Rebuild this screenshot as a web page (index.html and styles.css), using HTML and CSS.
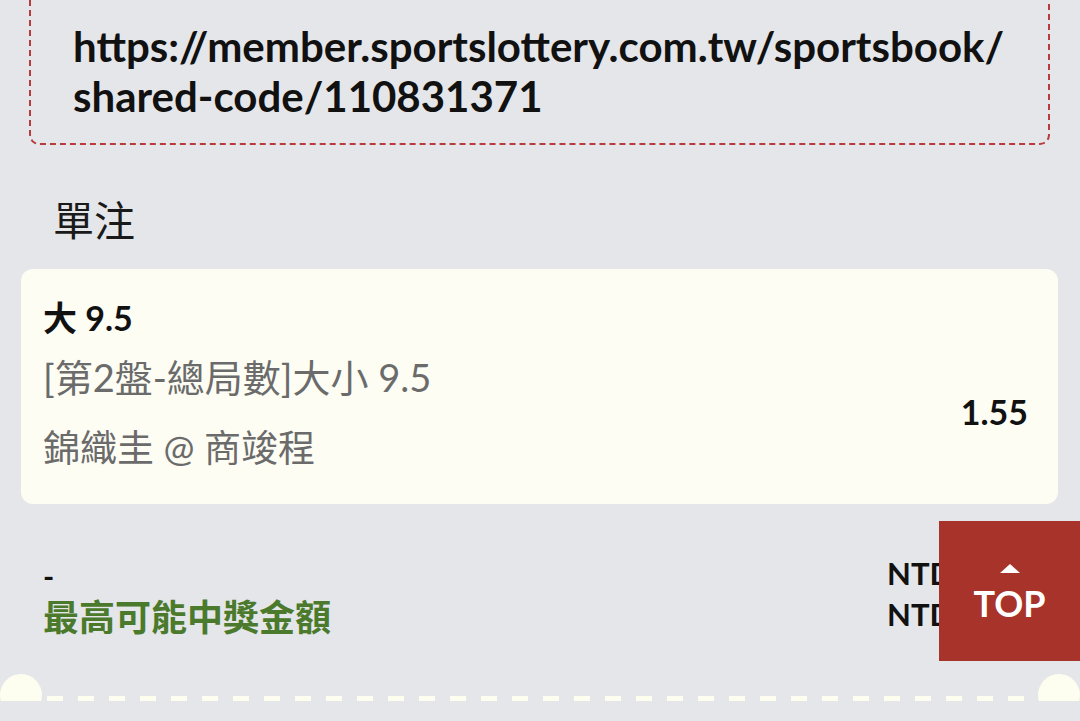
FILE: index.html
```html
<!DOCTYPE html>
<html lang="zh-Hant">
<head>
    <meta charset="UTF-8">
    <meta name="viewport" content="width=device-width, initial-scale=1.0">
    <title>單注分享</title>
    <link rel="stylesheet" href="styles.css">
</head>
<body>
    <div class="page">
        <div class="share-box">
            <p class="share-url">https://member.sportslottery.com.tw/sportsbook/<br>shared-code/110831371</p>
        </div>

        <h2 class="bet-type">單注</h2>

        <div class="bet-card">
            <div class="bet-info">
                <div class="bet-pick">大 9.5</div>
                <div class="bet-market">[第2盤-總局數]大小 9.5</div>
                <div class="bet-match">錦織圭 @ 商竣程</div>
            </div>
            <div class="bet-odds">1.55</div>
        </div>

        <div class="summary">
            <div class="summary-labels">
                <div class="summary-stake">-</div>
                <div class="summary-win">最高可能中獎金額</div>
            </div>
            <div class="summary-amounts">
                <div>NTD 0</div>
                <div>NTD 0</div>
            </div>
        </div>

        <div class="ticket-divider">
            <span class="notch"></span>
            <span class="dashes"></span>
            <span class="notch"></span>
        </div>
    </div>

    <a class="top-button" href="#">
        <span class="top-arrow"></span>
        <span class="top-label">TOP</span>
    </a>
</body>
</html>
```

FILE: styles.css
```css
html, body {
    margin: 0;
    padding: 0;
}
body {
    background-color: #e4e6e9;
    font-family: Lato, "Noto Sans CJK TC", sans-serif;
    color: #111;
    overflow: hidden;
}
.page {
    height: 721px;
}
.share-box {
    margin: -20px 30px 0 29px;
    padding: 39px 10px 22px 42px;
    border: 2px dashed #b73a3c;
    border-radius: 10px;
}
.share-url {
    margin: 0;
    font-size: 42px;
    font-weight: bold;
    line-height: 50px;
    color: #111;
    white-space: nowrap;
}
.bet-type {
    margin: 45px 0 23px 53px;
    font-size: 41px;
    font-weight: normal;
    line-height: 56px;
    font-family: "Noto Sans CJK TC", sans-serif;
    color: #1a1a1a;
}
.bet-card {
    display: flex;
    justify-content: space-between;
    margin: 0 22px 0 21px;
    padding: 27px 30px 33px 22px;
    background-color: #fdfdf4;
    border-radius: 12px;
}
.bet-pick {
    font-size: 34px;
    font-weight: bold;
    line-height: 44px;
}
.bet-market {
    margin-top: 14px;
    font-size: 38px;
    line-height: 46px;
    color: #6b6b6b;
}
.bet-match {
    margin-top: 25px;
    font-size: 37px;
    line-height: 46px;
    color: #6b6b6b;
}
.bet-odds {
    align-self: center;
    padding-top: 56px;
    font-size: 34px;
    font-weight: bold;
    line-height: 44px;
}
.summary {
    display: flex;
    justify-content: space-between;
    height: 82px;
    margin-top: 52px;
    padding: 0 22px 0 43px;
    font-weight: bold;
}
.summary-stake {
    font-size: 30px;
    line-height: 41px;
}
.summary-win {
    font-size: 36px;
    line-height: 41px;
    color: #4b7a2c;
}
.summary-amounts {
    width: 171px;
    margin-top: -3px;
    font-size: 31px;
    line-height: 41px;
}
.ticket-divider {
    display: flex;
    align-items: center;
    height: 42px;
    margin-top: 36px;
}
.notch {
    width: 42px;
    height: 42px;
    border-radius: 50%;
    background-color: #fdfdf0;
    flex: none;
}
.dashes {
    flex: 1;
    height: 5px;
    margin: 6px 4px 0 5px;
    background-image: repeating-linear-gradient(to right, #fdfdf0 0, #fdfdf0 16px, transparent 16px, transparent 31px);
}
.top-button {
    position: fixed;
    right: 0;
    top: 521px;
    width: 141px;
    height: 140px;
    background-color: #a8332a;
    color: #fff;
    text-decoration: none;
    display: flex;
    flex-direction: column;
    align-items: center;
    padding-top: 43px;
    box-sizing: border-box;
}
.top-arrow {
    width: 0;
    height: 0;
    border-left: 10px solid transparent;
    border-right: 10px solid transparent;
    border-bottom: 9px solid #fff;
}
.top-label {
    margin-top: 10px;
    font-size: 36px;
    font-weight: bold;
    line-height: 40px;
}
```
